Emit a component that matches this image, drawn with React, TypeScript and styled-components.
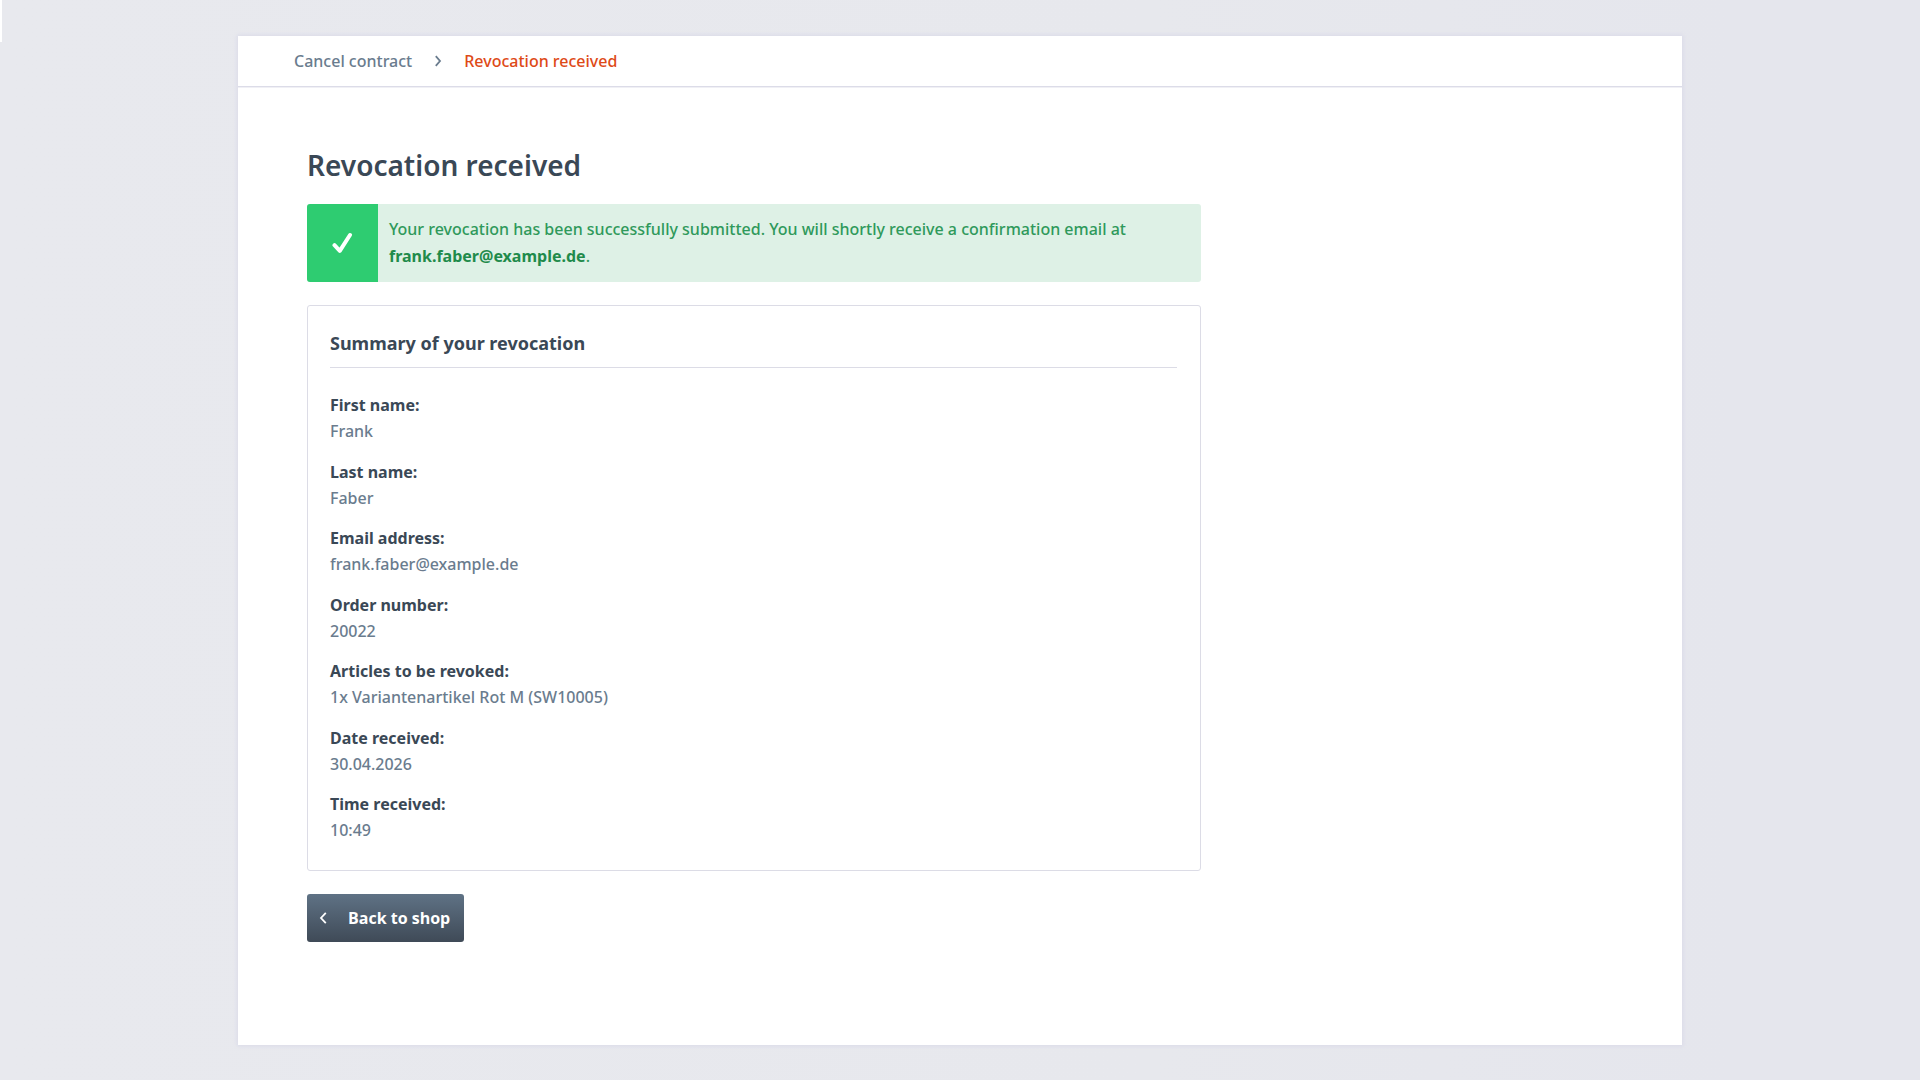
import React from "react";
import styled, { createGlobalStyle } from "styled-components";

const GlobalStyle = createGlobalStyle`
  *, *::before, *::after { box-sizing: border-box; }
  body {
    margin: 0;
    background: linear-gradient(90deg, #e8e9ee 0%, #e7e8ed 60%, #e5e6ed 90%);
    color: #6a7c8e;
    font: 500 16px/26px "Noto Sans", "Open Sans", sans-serif;
    -webkit-font-smoothing: antialiased;
  }
`;

const Backdrop = styled.div`
  position: relative;
  min-height: 100vh;
  padding: 36px 16px 35px;

  &::before {
    content: "";
    position: absolute;
    top: 0;
    left: 0;
    width: 2px;
    height: 42px;
    background: #fff;
  }
`;

const Page = styled.div`
  max-width: 1444px;
  margin: 0 auto;
  background: #fff;
  box-shadow: 0 0 4px 1px #dadae8;
`;

const Breadcrumb = styled.nav`
  border-bottom: 1px solid #dcdce8;
  box-shadow: 0 1px 0 #f0f0f5;
`;

const Crumbs = styled.ol`
  display: flex;
  align-items: center;
  gap: 21px;
  margin: 0;
  padding: 12px 56px 12px;
  list-style: none;
`;

const Crumb = styled.li`
  display: flex;
`;

const CrumbLink = styled.a<{ $active?: boolean }>`
  color: ${(p) => (p.$active ? "#de4a17" : "#6a7c8e")};
  text-decoration: none;
`;

const Content = styled.main`
  padding: 58px 69px 103px;
`;

const Column = styled.div`
  display: flex;
  flex-direction: column;
  align-items: flex-start;
  max-width: 894px;
`;

const Title = styled.h1`
  margin: 0 0 19px;
  color: #3a4856;
  font-size: 28px;
  line-height: 40px;
  font-weight: 600;
`;

const Alert = styled.div`
  display: flex;
  width: 100%;
  margin-bottom: 23px;
  border-radius: 3px;
  overflow: hidden;
  background: #def1e6;
  color: #2f995b;
`;

const AlertIcon = styled.div`
  display: flex;
  flex: none;
  align-items: center;
  justify-content: center;
  width: 71px;
  background: #2ecc71;
`;

const AlertText = styled.p`
  margin: 0;
  padding: 12px 11px;
  line-height: 27px;

  strong { color: #1f8b4b; font-weight: 700; }
`;

const Card = styled.section`
  width: 100%;
  margin-bottom: 23px;
  padding: 23px 23px 27px 22px;
  border: 1px solid #dcdce6;
  border-radius: 3px;
`;

const CardTitle = styled.h2`
  margin: 0 0 24px;
  padding-bottom: 10px;
  border-bottom: 1px solid #dcdce6;
  color: #3a4856;
  font-size: 18px;
  line-height: 28px;
  font-weight: 700;
`;

const Details = styled.dl`
  display: flex;
  flex-direction: column;
  justify-content: space-between;
  min-height: 451px;
  margin: 0;
`;

const Label = styled.dt`
  color: #3a4856;
  font-weight: 700;
`;

const Value = styled.dd`
  margin: 0;
`;

const BackButton = styled.button`
  display: flex;
  align-items: center;
  gap: 20px;
  height: 48px;
  padding: 0 14px 0 11px;
  border: 0;
  border-radius: 3px;
  background: linear-gradient(#5f7285, #3f4a57);
  color: #fff;
  font: inherit;
  font-family: "Open Sans", "Noto Sans", sans-serif;
  font-weight: 700;
  cursor: pointer;
`;

const details = [
  ["First name:", "Frank"],
  ["Last name:", "Faber"],
  ["Email address:", "frank.faber@example.de"],
  ["Order number:", "20022"],
  ["Articles to be revoked:", "1x Variantenartikel Rot M (SW10005)"],
  ["Date received:", "30.04.2026"],
  ["Time received:", "10:49"],
];

const Chevron = ({ left }: { left?: boolean }) => (
  <svg width="10" height="12" viewBox="0 0 10 12" fill="none" stroke="currentColor" strokeWidth="1.8" aria-hidden="true">
    <path d={left ? "M7.800 .8 3 6l4.800 5.200" : "M2.800 1.200 7 6l-4.200 4.800"} />
  </svg>
);

const Check = () => (
  <svg width="22" height="22" viewBox="0 0 22 22" fill="none" stroke="#fff" strokeWidth="4" strokeLinecap="round" strokeLinejoin="round" aria-hidden="true">
    <path d="M2.500 13.200 7.800 18.800 18 3" />
  </svg>
);

export default function App() {
  return (
    <>
      <GlobalStyle />
      <Backdrop>
        <Page>
          <Breadcrumb aria-label="Breadcrumb">
            <Crumbs>
              <Crumb><CrumbLink href="#cancel">Cancel contract</CrumbLink></Crumb>
              <Crumb aria-hidden="true"><Chevron /></Crumb>
              <Crumb><CrumbLink $active href="#received" aria-current="page">Revocation received</CrumbLink></Crumb>
            </Crumbs>
          </Breadcrumb>
          <Content>
            <Column>
              <Title>Revocation received</Title>
              <Alert role="status">
                <AlertIcon><Check /></AlertIcon>
                <AlertText>
                  Your revocation has been successfully submitted. You will shortly receive a confirmation email at{" "}
                  <strong>frank.faber@example.de</strong>.
                </AlertText>
              </Alert>
              <Card>
                <CardTitle>Summary of your revocation</CardTitle>
                <Details>
                  {details.map(([label, value]) => (
                    <div key={label}>
                      <Label>{label}</Label>
                      <Value>{value}</Value>
                    </div>
                  ))}
                </Details>
              </Card>
              <BackButton type="button"><Chevron left />Back to shop</BackButton>
            </Column>
          </Content>
        </Page>
      </Backdrop>
    </>
  );
}
